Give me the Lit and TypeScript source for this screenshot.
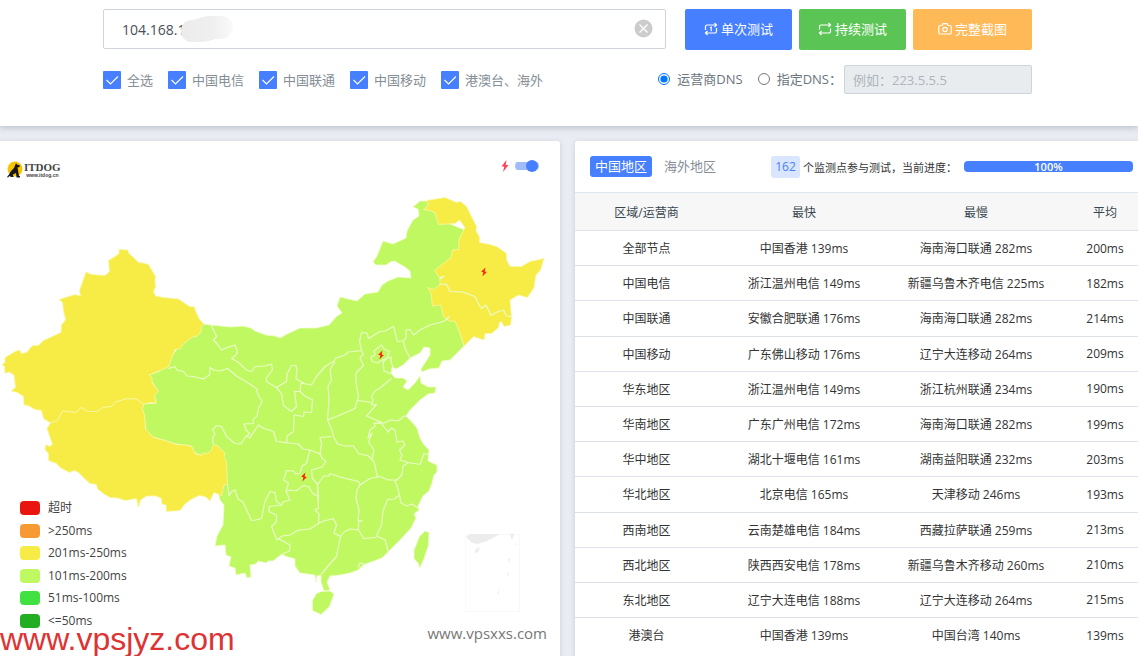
import { LitElement, html, css, svg } from "lit";
import { customElement, property, state } from "lit/decorators.js";

const LAND =
  "203,324 211,325 231,327 243,326 251,328 255,331 266,335 275,336 280,338 287,334 300,328 316,328 329,325 337,316 342,313 337,306 340,297 357,301 365,294 378,292 382,285 388,281 398,277 411,278 410,271 405,267 398,263 394,261 390,262 386,265 376,265 373,262 377,256 383,241 393,244 406,238 407,231 413,220 419,216 418,209 413,207 420,201 427,201 440,220 470,232 465,260 450,290 455,315 464,346 450,360 442,361 439,368 429,369 422,372 421,369 430,355 430,348 424,347 420,353 410,358 403,365 396,369 392,367 391,373 395,378 403,378 407,381 403,387 408,390 415,383 420,376 421,383 428,387 436,387 435,393 428,394 420,400 410,410 406,416 411,421 417,428 420,438 424,445 429,450 428,461 437,465 437,472 434,475 432,483 429,491 423,496 418,506 419,510 414,514 416,518 411,528 400,540 388,552 382,558 371,562 363,565 358,570 350,573 340,575 330,576 327,582 330,590 324,591 321,582 321,575 317,576 316,582 315,575 300,573 295,566 295,559 285,556 282,554 273,561 268,561 266,563 258,561 256,564 250,565 251,577 247,578 245,573 236,575 235,568 229,566 231,557 226,555 225,545 215,546 217,536 223,525 224,505 220,500 215,480 203,456 195,453 191,446 176,444 163,440 153,437 146,430 144,415 142,410 143,404 156,403 154,395 158,391 152,382 149,375 160,371 180,345";

const XINJIANG =
  "119,249.5 128,250 128.5,253 133.5,257.5 138.5,262.5 143,263 148.5,264.5 152,270.5 155.5,276.5 155,280 155.5,287 153.5,291.5 155.5,296 163.5,297.5 178.5,299 189.5,306.5 194.5,307 195.5,311 199,318.5 204,324.5 201,327.5 201.5,331.5 196.5,336.5 192.5,337 182.5,344.5 181,348.5 175,349.5 171.5,358.5 168.5,367 151.5,374 149,375 152,377.5 152,382.5 158.5,391.5 154.5,395 156,403.5 151.5,402.5 143.5,404 136,399 125,399 115,402.5 111.5,406.5 103.5,407.5 96.5,411.5 87.5,411.5 81,407.5 76,412.5 62.5,411 57.5,420.5 50.5,423 43.5,418.5 41.5,410.5 35,409.5 28,405.5 24,405 23.5,396.5 17.5,392.5 11,391 15.5,387.5 14,375 9,372 5,373.5 4.5,366.5 2,364.5 5,362.5 5,357.5 15,351.5 19.5,350 21.5,353.5 26.5,352.5 32.5,345.5 38.5,345.5 43.5,340.5 61,332.5 61.5,324.5 64,322 65.5,319.5 63.5,311 62.5,302.5 59,299.5 75,294.5 80.5,296 79.5,290.5 86,272 91.5,274.5 105,275.5 109.5,271.5 108.5,260.5 115,256.5 119,253.5";

const TIBET =
  "50.5,423 47,428.5 52.5,444.5 49.5,446.5 46,444.5 45,449.5 48.5,453.5 48.5,460.5 56.5,463.5 60,467.5 69.5,472.5 74,470.5 78.5,472.5 84,478 90,483.5 96.5,484.5 97.5,489 104,494 110,497.5 118,498 125,500.5 136.5,498.5 138.5,507.5 140.5,500 146.5,496 156,496 161.5,498.5 162,504 166,505 166.5,511.5 180,510.5 184.5,504.5 190,500 199,495.5 206,497 210,501 214,492.5 218,494 221.5,496 224,485 227.5,484 226.5,461.5 224,457 225,453 221.5,450 218,446 213.5,444.5 211.5,450.5 207.5,453.5 203,453 201.5,455.5 195,453.5 191.5,446 188,446 186,445 176.5,444.5 163.5,440 153.5,437.5 145.5,429 144.5,415 142.5,410 143.5,404 136,399 125,399 115,402.5 111.5,406.5 103.5,407.5 96.5,411.5 87.5,411.5 81,407.5 76,412.5 62.5,411 57.5,420.5";

const NORTHEAST =
  "426.5,200.5 445,197.5 456.5,202.5 460.5,201.5 466.5,206.5 471.5,216.5 476.5,226.5 476,231 479.5,237 479.5,242.5 490,244.5 496.5,246.5 506.5,253.5 506.5,260 510,266.5 521.5,266.5 530,261.5 544,258.5 540.5,270 536,275 534,287.5 527.5,297.5 518.5,295 510,300 511.5,318.5 510.5,325 504,326.5 501.5,321.5 499.5,322.5 498.5,327.5 491.5,333.5 485,333.5 484,340 473.5,336.5 464,346 460,333.5 455,321 450,321.5 443.5,316.5 440.5,305 432.5,306 431,293.5 427.5,287.5 433.5,289.5 440,284.5 440,278.5 434.5,270.5 451,257.5 452.5,250 458.5,249.5 459,239.5 465,227.5 459.5,220 455,223.5 438.5,224.5 435,212.5 430,210.5 423.5,209.5 428.5,205";

const TAIWAN =
  "425,531 429,532.5 428.5,545 424,558.5 419.5,568.5 418.5,563.5 414,558.5 414,550 419.5,536.5";
const HAINAN =
  "321.5,591.5 330,591 334,594 329.5,606.5 321,614.5 312.5,610.5 312.5,600.5 316.5,593.5";

const BORDERS = [
  "211.5,325.5 216.5,336.5 213.5,340 218,345 221.5,350 226,348 235,345 237.5,351.5 236,355 231.5,358.5 238,362 246.5,370 251.5,371.5 255,366.5 265,366 271.5,364 272.5,370 266,378.5 267,382 276.5,387.5 286.5,381.5 287,374 291.5,365.5 296,365.5 297,370 296,378.5 303.5,383.5 311.5,385 316.5,376.5 325,366.5 333.5,361.5 336,358 345,355 348,352 361.5,350.5 359.5,341.5 361.5,332.5 367,333 368.5,338.5 380,331.5 385,331 393.5,326.5 397.5,341.5 403,341 406,338 406,330 410,329.5 413.5,335 420,330 430,325 443.5,321.5 450,316.5",
  "403.5,341.5 405,348.5 410.5,358.5",
  "168.5,368.5 175,366.5 177,370 183.5,371.5 187,376 193,376.5 203.5,379 209.5,375 210,367.5 214,370 220,371 227.5,368.5 236.5,376 245,381 256.5,388.5 258,395 262,401.5 258.5,408.5 257,416 253,420 253.5,423.5 244,424 246,430 250,434 246,436 250,438 253,433 258.5,425 264,428.5 273.5,431.5 276.5,441.5 286.5,442.5 287,436 293.5,431.5 294,415 303.5,416.5 304,412 311.5,412.5 312.5,400 305,396 300,391.5 294.5,391.5 296.5,406.5 291.5,411.5 283.5,405.5 281.5,393.5 276.5,387.5",
  "300,391.5 301,383.5 304,382",
  "213,444 212.5,438 215,434 212.5,430 216.5,425.5 221.5,426.5 226.5,436.5 235,443.5 241,444 246,436",
  "335,361.5 330,370 331.5,380 328,386 329,400 327.5,420 332,430 333.5,436.5 337.5,444 345,446 353.5,446 358.5,453.5 368.5,456 374,461.5 377.5,477.5",
  "283.5,442.5 298.5,444 303,449 310,450 320,454 321.5,443.5 320,437.5 331.5,436.5",
  "320,454 322,458 326,461.5 322,467 311.5,470 312.5,478.5 317.5,484.5 318.5,500",
  "310,450 308,457 306.5,463.5 302,466 300,473.5 296,474 293,471 286.5,470.5 283.5,480 288.5,483 286,491.5 290,490 296,491 303.5,485.5 309,487 311.5,492 316.5,496",
  "317.5,485 323.5,476 329,476 330,473.5 340,477 350,479.5 358.5,481.5 360,485 370,478.5 380,476.5 388,480 396.5,480",
  "317.5,485 318.5,508.5 315,509.5 319,514 318.5,523.5 310,529 298.5,530 290,535 282,536 277,540 271.5,526.5 276.5,522 276.5,515 269,511.5 269,506.5 281.5,505 283,502 290,500 286,491.5",
  "227.5,484 229,496 231,492 235,490 238,499 243,502 251.5,520.5 256,520 261.5,518.5 265,501.5 270,491.5 275,492.5 276.5,501.5 281.5,505",
  "278.5,538.5 290,545 289.5,551 282.5,554",
  "318.5,523.5 324,521 333.5,518.5 336.5,525 334,533 341.5,537",
  "340.5,536.5 336.5,556.5 328,566 321.5,574",
  "340.5,536.5 344,532 350,529 358.5,530 363.5,538.5 376.5,537.5",
  "360,485 357,490 356,498.5 359,510 358,520 362,521 358.5,521 358.5,530",
  "376.5,536 385,540 388.5,552.5",
  "376.5,536 381.5,525 383,511 387.5,499.5 394,499 399.5,495",
  "399.5,495 401,503 407,506 412,504 418.5,508.5",
  "399.5,495 397,486 395,481.5 402,475 403,466 408.5,462.5",
  "408.5,462.5 420,464.5 424,453.5 429.5,455",
  "408.5,462.5 400,460 402,455 399.5,450 405,445 403,441 397,442 395,430 391.5,428 388,432 381.5,423.5 377,422",
  "372,459 374,450 368.5,442 372,433 368,438 370,430 375,426.5 374,423 381.5,423.5",
  "407.5,416.5 404,416 398.5,421 391,420 383.5,423 376,420 366.5,416 376.5,404.5 371.5,405 373,400 371.5,396.5 375,391 380,388 391.5,378.5",
  "361.5,350.5 363.5,354 360,358 363.5,365.5 356,373 356,382 358.5,396.5 355,408.5 340,415 327.5,420",
  "356.5,400 362,401 371.5,402.5",
  "372,361.5 371,357 375,355 374,351 381.5,345 384,349 389.5,351.5 387,358 380,361 378,363 372,361.5",
  "387,358 383,362 384,371 391,374",
  "387,358 391,357 391,362 393,367",
  "440,284.5 446.5,284 450,291.5 463,292 475,296.5 478,303 481.5,308.5 486,305 491,315.5 497,312 503.5,310 506.5,316 511.5,316.5",
  "439,278 444,276 440,279",
  "358,567 360,563 364,564 363,567 359,568",
];

const MARKERS = [
  [484, 272],
  [381, 355],
  [304, 477],
];

const LEGEND = [
  ["#e8160f", "超时"],
  ["#f89a33", ">250ms"],
  ["#f6ec45", "201ms-250ms"],
  ["#c0f862", "101ms-200ms"],
  ["#41e142", "51ms-100ms"],
  ["#22ad22", "<=50ms"],
];

const ROWS = [
  ["全部节点", "中国香港 139ms", "海南海口联通 282ms", "200ms"],
  ["中国电信", "浙江温州电信 149ms", "新疆乌鲁木齐电信 225ms", "182ms"],
  ["中国联通", "安徽合肥联通 176ms", "海南海口联通 282ms", "214ms"],
  ["中国移动", "广东佛山移动 176ms", "辽宁大连移动 264ms", "209ms"],
  ["华东地区", "浙江温州电信 149ms", "浙江杭州联通 234ms", "190ms"],
  ["华南地区", "广东广州电信 172ms", "海南海口联通 282ms", "199ms"],
  ["华中地区", "湖北十堰电信 161ms", "湖南益阳联通 232ms", "203ms"],
  ["华北地区", "北京电信 165ms", "天津移动 246ms", "193ms"],
  ["西南地区", "云南楚雄电信 184ms", "西藏拉萨联通 259ms", "213ms"],
  ["西北地区", "陕西西安电信 178ms", "新疆乌鲁木齐移动 260ms", "210ms"],
  ["东北地区", "辽宁大连电信 188ms", "辽宁大连移动 264ms", "215ms"],
  ["港澳台", "中国香港 139ms", "中国台湾 140ms", "139ms"],
];

const base = css`
  *, *::before, *::after { box-sizing: border-box; }
  button, input { font: inherit; margin: 0; }
`;

@customElement("test-form")
class TestForm extends LitElement {
  static styles = [base, css`
    :host { display: block; background: #fff; padding: 9px 106px 32px 103px; box-shadow: 0 2px 6px rgba(60, 70, 90, 0.25); position: relative; }
    .line { display: flex; align-items: flex-start; }
    .host { flex: 1; position: relative; margin-right: 19px; }
    .host-input { display: block; width: 100%; height: 40px; border: 1px solid #ced4da; border-radius: 2px; padding: 0 40px 0 18px; color: #495057; font-size: 14px; outline: 0; }
    .smudge { position: absolute; left: 73px; top: 6px; width: 58px; height: 28px; }
    .clear { position: absolute; right: 13px; top: 10px; width: 19px; height: 19px; padding: 0; border: 0; background: none; }
    .clear svg { display: block; }
    .actions { display: flex; gap: 7px; }
    .btn { display: flex; align-items: center; justify-content: center; gap: 3px; width: 107px; height: 41px; border: 0; border-radius: 2px; color: #fff; padding: 0 0 2px; font-size: 13px; }
    .btn.wide { width: 119px; }
    .blue { background: #467fff; }
    .green { background: #5ac455; }
    .orange { background: #ffb957; }
    .options { margin-top: 15px; align-items: center; justify-content: space-between; color: #868e96; font-size: 13px; }
    .checks { display: flex; gap: 15px; }
    .check { display: flex; align-items: center; gap: 6px; white-space: nowrap; }
    .check input { appearance: none; width: 18px; height: 18px; border-radius: 1px; background: #467fff; }
    .check input:checked { background: #467fff url("data:image/svg+xml,%3Csvg xmlns='http://www.w3.org/2000/svg' viewBox='0 0 18 18'%3E%3Cpath d='M3.5 9l4 4 7.5-7.5' fill='none' stroke='white' stroke-width='1.1'/%3E%3C/svg%3E"); }
    .dns { display: flex; align-items: center; color: #6c757d; }
    .dns label { display: flex; align-items: center; gap: 7px; white-space: nowrap; margin-right: 15px; padding-bottom: 2px; }
    .dns label.last { margin-right: 2px; }
    .dns input[type="radio"] { width: 12px; height: 12px; accent-color: #0075ff; }
    .dns-input { width: 188px; height: 29px; border: 1px solid #ced4da; border-radius: 2px; background: #e9ecef; padding: 0 8px; outline: 0; }
    .dns-input::placeholder { color: #adb5bd; opacity: 1; }
  `];

  render() {
    return html`
      <div class="line">
        <div class="host">
          <input class="host-input" aria-label="IP" .value=${"104.168.1"} />
          <svg class="smudge" viewBox="0 0 58 28" aria-hidden="true">
            <defs>
              <linearGradient id="fade"><stop offset="0" stop-color="#ececec" /><stop offset="0.6" stop-color="#efefef" /><stop offset="1" stop-color="#fafafa" /></linearGradient>
              <filter id="soft"><feGaussianBlur stdDeviation="0.7" /></filter>
            </defs>
            <path filter="url(#soft)" fill="url(#fade)" d="M15 5C22 5 25 1 34 1h10c9 0 13 5 13 11s-4 12-13 12h-5c-5 2-9 3-16 3H16C9 27 5 22 5 16S9 5 15 5z" />
          </svg>
          <button class="clear" aria-label="清除">
            <svg width="19" height="19" viewBox="0 0 19 19"><circle cx="9.5" cy="9.5" r="9" fill="#ccc" /><path d="M5.5 5.5l8 8m0-8l-8 8" stroke="#fff" stroke-width="1.3" /></svg>
          </button>
        </div>
        <div class="actions">
          <button class="btn blue">
            <svg width="14" height="14" viewBox="0 0 14 14" fill="none" stroke="#fff" stroke-width="1.2"><path d="M1.5 8V4.5A1.5 1.5 0 0 1 3 3H12.5M10.5 1l2 2-2 2M12.5 6v3.5A1.500 1.500 0 0 1 11 11H1.500M3.500 9l-2 2 2 2M6 5.800l1.200-.6v4" /></svg>单次测试
          </button>
          <button class="btn green">
            <svg width="14" height="14" viewBox="0 0 14 14" fill="none" stroke="#fff" stroke-width="1.2"><path d="M1.500 7.500V4.500A1.500 1.500 0 0 1 3 3H12.500M10.500 1l2 2-2 2M12.500 6.500v3A1.500 1.500 0 0 1 11 11H1.500M3.500 9l-2 2 2 2" /></svg>持续测试
          </button>
          <button class="btn orange wide">
            <svg width="14" height="14" viewBox="0 0 14 14" fill="none" stroke="#fff" stroke-width="1.2"><path d="M2 3.500h2l1-1.800h4l1 1.800h2a1.200 1.200 0 0 1 1.200 1.200v6.100a1.200 1.200 0 0 1-1.200 1.200H2a1.200 1.200 0 0 1-1.200-1.200V4.700A1.200 1.200 0 0 1 2 3.500z" /><circle cx="7" cy="7.500" r="2.200" /></svg>完整截图
          </button>
        </div>
      </div>
      <div class="line options">
        <div class="checks">
          ${["全选", "中国电信", "中国联通", "中国移动", "港澳台、海外"].map(
            (name) => html`<label class="check"><input type="checkbox" checked />${name}</label>`
          )}
        </div>
        <div class="dns">
          <label><input type="radio" name="dns" checked />运营商DNS</label>
          <label class="last"><input type="radio" name="dns" />指定DNS：</label>
          <input class="dns-input" aria-label="DNS" placeholder="例如：223.5.5.5" disabled />
        </div>
      </div>
    `;
  }
}

@customElement("latency-map")
class LatencyMap extends LitElement {
  static styles = [base, css`
    :host { display: block; position: relative; background: #fff; border-radius: 0 3px 0 0; box-shadow: 0 1px 5px rgba(70, 80, 110, 0.2); }
    .map { display: block; width: 100%; }
    .logo { position: absolute; left: 7px; top: 20px; display: flex; align-items: center; gap: 1px; }
    .brand { font-family: "Liberation Serif", serif; font-weight: 700; font-size: 11px; line-height: 11px; color: #444; }
    .brand small { display: block; font-size: 5px; line-height: 4px; font-family: "Liberation Sans", sans-serif; text-align: center; }
    .switch { position: absolute; right: 21px; top: 19px; display: flex; align-items: center; gap: 6px; }
    .switch input { appearance: none; display: block; width: 24px; height: 12px; background: linear-gradient(#a0bcfd, #a0bcfd) center / 24px 8px no-repeat; border-radius: 6px; }
    .switch input::before { content: ""; display: block; width: 12px; height: 12px; border-radius: 6px; background: #467fff; margin-left: 11px; }
    .legend { position: absolute; left: 20px; top: 356px; height: 135px; margin: 0; padding: 0; list-style: none; display: grid; grid-auto-rows: 1fr; }
    .legend li { display: grid; grid-template-columns: 20px auto; gap: 8px; align-items: center; font-size: 12px; line-height: 18px; color: #444; }
    .swatch { width: 20px; height: 14px; border-radius: 4px; }
    .source { position: absolute; right: 13px; top: 482px; font-size: 15px; line-height: 20px; color: #777; }
  `];

  render() {
    return html`
      <svg class="map" viewBox="0 141 560 515" role="img" aria-label="中国">
        <g stroke="#f1fbc9" stroke-width="0.8" stroke-linejoin="round">
          <g fill="#c0f862">
            <polygon points=${LAND} /><polygon points=${TAIWAN} /><polygon points=${HAINAN} />
          </g>
          <g fill="#f6ec45" stroke="#f9f6a8">
            <polygon points=${XINJIANG} /><polygon points=${TIBET} /><polygon points=${NORTHEAST} />
          </g>
          <g fill="none" stroke="#eafcc9" stroke-width="1.2">
            ${BORDERS.map((p) => svg`<polyline points=${p} />`)}
          </g>
        </g>
        <g fill="none" stroke="#f9f9f9"><rect x="465.500" y="534.500" width="54" height="77" /></g>
        <g fill="#ececec">
          <path d="M466 537l4-3h30l-13 7-9 3-6-1zM510 534h4l-2 6zM475 550l5-3-2 5-3 1zM508 558l2 1-1 4zM507 574l2-2-1 5zM497 593l3-4-2 5zM516 541l-1 4h1zM443 524h3z" />
        </g>
        ${MARKERS.map(
          ([x, y]) => svg`<path transform="translate(${x} ${y})" fill="#f20" d="M1.500-4.500l-4.300 4.200 2.200.5-1 4.300 4.400-4.600-2.200-.5z" />`
        )}
      </svg>
      <div class="logo">
        <svg width="16" height="17" viewBox="0 0 16 17">
          <circle cx="8" cy="8" r="7.500" fill="#f7c600" />
          <path d="M9 2l1 1.500 3 1-.5 1.500-2 .5L11 9l1 6h1v1.500H9.500L9 12l-3 1.500V15l1 1H4l-1.500-1-1.500 1.500L0 16l2-2.500L4 10l3-3z" fill="#181818" />
        </svg>
        <div class="brand">ITDOG<small>www.itdog.cn</small></div>
      </div>
      <label class="switch">
        <svg width="8" height="12" viewBox="0 0 8 12"><path fill="#ff4058" d="M5.500 0L.5 6.500h2.800L2 12l5.500-7H4.700z" /></svg>
        <input type="checkbox" aria-label="地图标记" checked />
      </label>
      <ul class="legend">
        ${LEGEND.map(([color, name]) => html`<li><span class="swatch" style="background:${color}"></span>${name}</li>`)}
      </ul>
      <div class="source">www.vpsxxs.com</div>
    `;
  }
}

@customElement("result-panel")
class ResultPanel extends LitElement {
  @property({ type: Number }) progress = 100;
  @state() tab = 0;

  static styles = [base, css`
    :host { display: block; background: #fff; border-radius: 3px 0 0 0; box-shadow: 0 1px 5px rgba(70, 80, 110, 0.2); }
    .top { display: flex; align-items: center; height: 51px; padding: 0 5px 0 15px; white-space: nowrap; }
    .tabs { display: flex; gap: 7px; margin-right: 50px; }
    .tab { border: 0; border-radius: 3px; padding: 0 5px; height: 21px; line-height: 21px; font-size: 13px; background: none; color: #868e96; }
    .tab.on { background: #467fff; color: #fff; }
    .count { background: #dae5ff; color: #467fff; border-radius: 3px; width: 29px; text-align: center; font-size: 12px; line-height: 22px; margin-right: 3px; }
    .note { font-size: 11px; color: #333; flex: none; }
    .bar { flex: 1; margin-left: 7px; height: 11px; border-radius: 4px; background: #e9ecef; }
    .fill { display: flex; align-items: center; justify-content: center; height: 100%; background: #467fff; border-radius: 4px; color: #fff; font-size: 11px; line-height: 16px; font-weight: 600; }
    table { width: 100%; height: 460px; border-collapse: collapse; table-layout: fixed; font-size: 12px; color: #333; text-align: center; }
    th { height: 38px; font-weight: 400; background: #f7f7f7; color: #37474f; }
    th, td { padding: 0; border-top: 1px solid #dee2e6; white-space: nowrap; }
    th { border-color: #dfe5ee; }
    .c1 { width: 143px; }
    .c4 { width: 76px; }
    th:last-child, td:last-child { padding-left: 10px; }
  `];

  render() {
    return html`
      <div class="top">
        <div class="tabs">
          ${["中国地区", "海外地区"].map(
            (name, i) => html`<button class="tab ${i === this.tab ? "on" : ""}" @click=${() => (this.tab = i)}>${name}</button>`
          )}
        </div>
        <span class="count">162</span>
        <span class="note">个监测点参与测试，当前进度：</span>
        <div class="bar"><div class="fill" style="width:${this.progress}%">${this.progress}%</div></div>
      </div>
      <table>
        <colgroup><col class="c1" /><col /><col /><col class="c4" /></colgroup>
        <thead><tr><th>区域/运营商</th><th>最快</th><th>最慢</th><th>平均</th></tr></thead>
        <tbody>
          ${ROWS.map((row) => html`<tr>${row.map((cell) => html`<td>${cell}</td>`)}</tr>`)}
        </tbody>
      </table>
    `;
  }
}

@customElement("app-root")
class AppRoot extends LitElement {
  static styles = css`
    :host { display: flex; flex-direction: column; min-height: 100vh; position: relative; overflow: hidden; background: #e9ecf2; font-family: "Open Sans", "Noto Sans CJK SC", sans-serif; font-size: 13px; }
    main { flex: 1; display: grid; grid-template-columns: 560fr 563fr; gap: 15px; margin-top: 15px; }
    .watermark { position: absolute; left: 0; bottom: 0; font-family: "Liberation Sans", sans-serif; font-size: 32px; line-height: 34px; color: #dd3333; }
  `;

  render() {
    return html`
      <test-form></test-form>
      <main>
        <latency-map></latency-map>
        <result-panel></result-panel>
      </main>
      <div class="watermark">www.vpsjyz.com</div>
    `;
  }
}
